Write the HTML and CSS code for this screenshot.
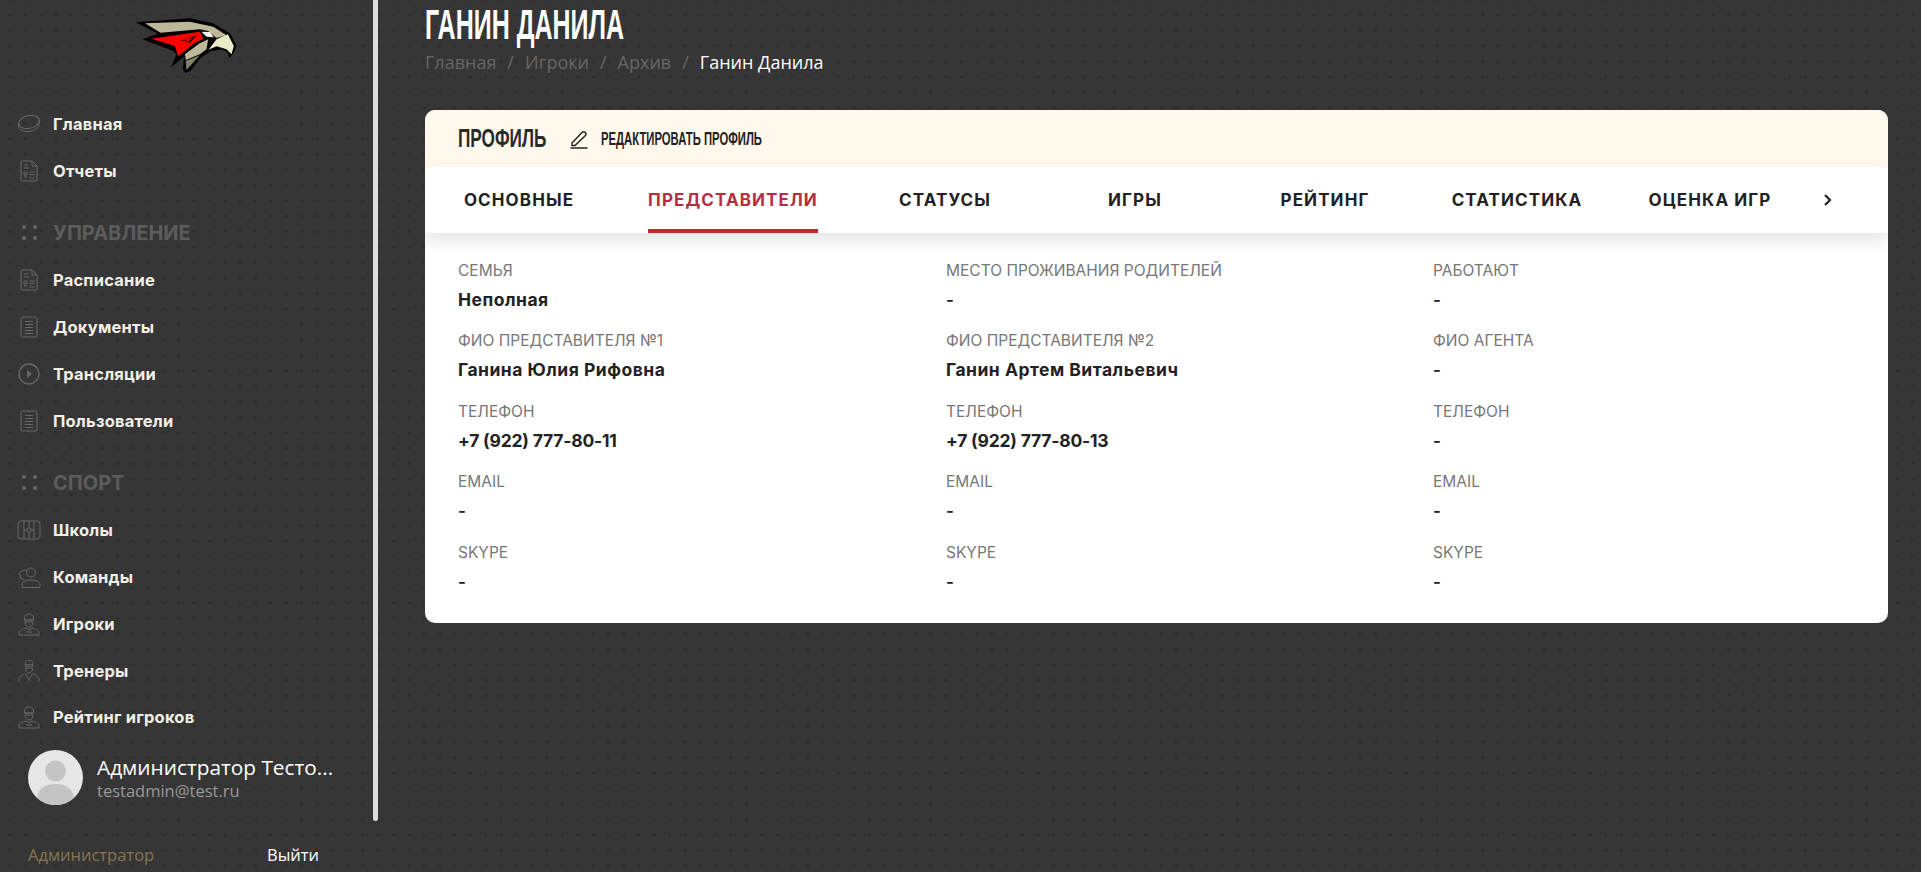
FILE: index.html
```html
<!DOCTYPE html>
<html lang="ru">
<head>
  <meta charset="UTF-8" />
  <title>Ганин Данила</title>
  <link rel="stylesheet" href="styles.css">
</head>
<body>
<svg width="0" height="0" class="defs">
  <defs>
    <symbol id="i-puck" viewBox="0 0 24 20">
      <ellipse cx="12" cy="8" rx="10.5" ry="6.5" transform="rotate(-12 12 8)" fill="none" stroke="currentColor"/>
      <path d="M1.5 9v3.5c.5 3 4 5 8.5 5 5 0 10-2 12-6.5V6.500" fill="none" stroke="currentColor"/>
    </symbol>
    <symbol id="i-report" viewBox="0 0 24 24">
      <path d="M5 2h10l5 5v14a1 1 0 0 1-1 1H5a1 1 0 0 1-1-1V3a1 1 0 0 1 1-1zM15 2v5h5M7 6h4M7 9h5M7 13h3v3H7zM7 18h3M12.500 13h5M12.500 15.500h5M12.500 19h5" fill="none" stroke="currentColor"/>
    </symbol>
    <symbol id="i-doc" viewBox="0 0 24 24">
      <rect x="4" y="2" width="16" height="20" rx="2" fill="none" stroke="currentColor"/>
      <path d="M8 6.500h8M8 9.500h8M8 12.500h8M8 15.500h8M8 18.500h8" stroke="currentColor"/>
    </symbol>
    <symbol id="i-play" viewBox="0 0 24 24">
      <circle cx="12" cy="12" r="10" fill="none" stroke="currentColor" stroke-width="1.300"/>
      <path d="M10 8l5 4-5 4z" fill="currentColor"/>
    </symbol>
    <symbol id="i-dots" viewBox="0 0 24 24">
      <circle cx="7" cy="6" r="2" fill="currentColor"/><circle cx="18" cy="6" r="2" fill="currentColor"/>
      <circle cx="7" cy="17" r="2" fill="currentColor"/><circle cx="18" cy="17" r="2" fill="currentColor"/>
    </symbol>
    <symbol id="i-field" viewBox="0 0 24 20">
      <rect x="1" y="1" width="22" height="18" rx="3" fill="none" stroke="currentColor"/>
      <path d="M7 1v18M17 1v18M12 1v6.500M12 12.500V19M7 10h2.800M14.200 10H17" fill="none" stroke="currentColor"/>
      <circle cx="12" cy="10" r="2.200" fill="none" stroke="currentColor"/>
    </symbol>
    <symbol id="i-team" viewBox="0 0 24 22">
      <circle cx="14" cy="6.500" r="4.500" fill="none" stroke="currentColor"/>
      <path d="M5 21.500v-3c0-3 4-4.500 9-4.500s9 1.500 9 4.500v3zM10 4C6 4 2.500 6 1.500 8l2.500 2-1 2 4 1.500" fill="none" stroke="currentColor"/>
    </symbol>
    <symbol id="i-player" viewBox="0 0 24 24">
      <path d="M7.500 8V6c0-2.500 2-4 4.500-4s4.500 1.500 4.500 4v2zM7 8h10M8 10c0 3 1.500 5 4 5s4-2 4-5M8 10h8M2 23v-2c0-3 4-4 7-5l3 2 3-2c3 1 7 2 7 5v2zM9 20h6" fill="none" stroke="currentColor"/>
    </symbol>
    <symbol id="i-coach" viewBox="0 0 24 26">
      <path d="M8 8V4c0-1.500 1.500-2.500 4-2.500s4 1 4 2.500v4zM8 6h8M8 10c0 3 1.500 5 4 5s4-2 4-5zM1 25v-3c0-3 4-5 7-6l4 6 4-6c3 1 7 3 7 6v3M12 22v3" fill="none" stroke="currentColor"/>
    </symbol>
  </defs>
</svg>

<div class="layout">
  <aside class="sidebar">
    <div class="side-scroll">
      <div class="logo">
        <svg width="107" height="60" viewBox="400 50 320 180">
          <path d="M408 69 L570 57 L640 72 L692 103 L710 140 L702 160 L688 177 L684 160 L665 150 L632 156 L602 176 L572 215 L556 221 L549 208 L552 172 L514 204 L530 165 L520 155 L428 120 L474 103 Z" fill="#000"/>
          <path d="M436 72 L570 67 L640 82 L680 108 L650 116 L625 95 L600 90 L482 100 Z" fill="#bdb89a"/>
          <path d="M455 118 L600 97 L610 118 L585 130 L535 171 L525 140 Z" fill="#f00"/>
          <path d="M540 125 L590 108 L570 132 L555 124 Z" fill="#2a0a0a"/>
          <path d="M552 121 L578 114 L566 126 Z" fill="#f00"/>
          <path d="M605 97 L630 98 L642 114 L620 112 Z" fill="#f4f4f0"/>
          <path d="M626 151 L650 120 L684 105 L702 140 L695 165 L680 150 L650 141 Z" fill="#ecebc8"/>
          <path d="M555 165 L600 132 L625 120 L620 150 L600 165 L558 182 Z" fill="#bdb89a"/>
          <path d="M558 185 L600 168 L560 212 Z" fill="#7f8468"/>
        </svg>
      </div>
      <nav class="menu">
        <a class="menu-item"><svg class="icon"><use href="#i-puck"/></svg>Главная</a>
        <a class="menu-item"><svg class="icon"><use href="#i-report"/></svg>Отчеты</a>
        <div class="menu-title"><svg class="icon"><use href="#i-dots"/></svg>Управление</div>
        <a class="menu-item"><svg class="icon"><use href="#i-report"/></svg>Расписание</a>
        <a class="menu-item"><svg class="icon"><use href="#i-doc"/></svg>Документы</a>
        <a class="menu-item"><svg class="icon"><use href="#i-play"/></svg>Трансляции</a>
        <a class="menu-item"><svg class="icon"><use href="#i-doc"/></svg>Пользователи</a>
        <div class="menu-title"><svg class="icon"><use href="#i-dots"/></svg>Спорт</div>
        <a class="menu-item"><svg class="icon"><use href="#i-field"/></svg>Школы</a>
        <a class="menu-item"><svg class="icon"><use href="#i-team"/></svg>Команды</a>
        <a class="menu-item"><svg class="icon"><use href="#i-player"/></svg>Игроки</a>
        <a class="menu-item"><svg class="icon"><use href="#i-coach"/></svg>Тренеры</a>
        <a class="menu-item"><svg class="icon"><use href="#i-player"/></svg>Рейтинг игроков</a>
      </nav>
      <div class="user">
        <svg class="avatar" viewBox="0 0 55 55">
          <circle cx="27.500" cy="27.500" r="27.500" fill="#e6e6e6"/>
          <circle cx="27.500" cy="21" r="10.500" fill="#c4c4c4"/>
          <path d="M9 48c1-10 9-14 18.500-14S45 38 46 48a27.500 27.500 0 0 1-37 0z" fill="#c4c4c4"/>
        </svg>
        <div class="user-text">
          <div class="user-name">Администратор Тесто...</div>
          <div class="user-mail">testadmin@test.ru</div>
        </div>
      </div>
    </div>
    <div class="side-foot">
      <span class="role">Администратор</span>
      <a class="logout">Выйти</a>
    </div>
  </aside>
  <div class="scrollbar"><div class="scrollbar-thumb"></div></div>

  <main class="content">
    <h1 class="page-title"><span>Ганин Данила</span></h1>
    <div class="crumbs">
      <span>Главная</span><i>/</i><span>Игроки</span><i>/</i><span>Архив</span><i>/</i><b>Ганин Данила</b>
    </div>

    <section class="card">
      <header class="card-head">
        <h2><span>Профиль</span></h2>
        <a class="edit">
          <svg width="20" height="20" viewBox="0 0 20 20"><path d="M3 14L13 3.500c1-1 2.200-1 3.200 0s1 2.200 0 3.200L6 16.500H3zM1.500 19h17" fill="none" stroke="#222" stroke-width="1.400"/></svg>
          <span>Редактировать профиль</span>
        </a>
      </header>
      <div class="tabs">
        <a class="tab"><span>Основные</span></a>
        <a class="tab active"><span>Представители</span></a>
        <a class="tab"><span>Статусы</span></a>
        <a class="tab"><span>Игры</span></a>
        <a class="tab"><span>Рейтинг</span></a>
        <a class="tab"><span>Статистика</span></a>
        <a class="tab"><span>Оценка игр</span></a>
        <a class="tab-next"><svg width="10" height="14" viewBox="0 0 10 14"><path d="M2 2l5 5-5 5" fill="none" stroke="#222" stroke-width="2.200"/></svg></a>
      </div>
      <div class="info">
        <div class="field"><label>Семья</label><p class="strong">Неполная</p></div>
        <div class="field"><label>Место проживания родителей</label><p>-</p></div>
        <div class="field"><label>Работают</label><p>-</p></div>

        <div class="field"><label>ФИО представителя №1</label><p class="strong">Ганина Юлия Рифовна</p></div>
        <div class="field"><label>ФИО представителя №2</label><p class="strong">Ганин Артем Витальевич</p></div>
        <div class="field"><label>ФИО агента</label><p>-</p></div>

        <div class="field"><label>Телефон</label><p class="strong phone">+7 (922) 777-80-11</p></div>
        <div class="field"><label>Телефон</label><p class="strong phone">+7 (922) 777-80-13</p></div>
        <div class="field"><label>Телефон</label><p>-</p></div>

        <div class="field"><label>Email</label><p>-</p></div>
        <div class="field"><label>Email</label><p>-</p></div>
        <div class="field"><label>Email</label><p>-</p></div>

        <div class="field"><label>Skype</label><p>-</p></div>
        <div class="field"><label>Skype</label><p>-</p></div>
        <div class="field"><label>Skype</label><p>-</p></div>
      </div>
    </section>
  </main>
</div>
</body>
</html>
```

FILE: styles.css
```css
* {
  box-sizing: border-box;
}
html,
body {
  height: 100%;
  margin: 0;
}
body {
  font-family: Inter, "Open Sans", sans-serif;
  color: #222;
  background-color: #363636;
  background-image: radial-gradient(circle, #2e2e2e 0.8px, transparent 2.4px);
  background-size: 15.35px 15.47px;
  background-position: 2.3px 7.3px;
  overflow: hidden;
}
a {
  color: inherit;
  text-decoration: none;
}
.defs {
  display: block;
  height: 0;
}
.layout {
  display: flex;
  height: 872px;
}

/* sidebar */
.sidebar {
  width: 373px;
  flex: none;
  display: flex;
  flex-direction: column;
}
.side-scroll {
  height: 820px;
}
.logo {
  display: flex;
  justify-content: center;
  padding: 16px 0 0 0;
  height: 100.500px;
}
.menu-item,
.menu-title {
  display: flex;
  align-items: center;
  height: 46.800px;
  padding-left: 17px;
  font-weight: 700;
  font-size: 16.500px;
  letter-spacing: 0.2px;
  color: #f2efe6;
}
.menu-title {
  margin-top: 16px;
  font-size: 20px;
  letter-spacing: 0;
  color: #5c5c5c;
  text-transform: uppercase;
}
.icon {
  width: 24px;
  height: 24px;
  flex: none;
  margin-right: 12px;
  color: #686868;
}
.user {
  display: flex;
  align-items: center;
  margin-top: 9px;
  padding-left: 28px;
}
.avatar {
  width: 55px;
  height: 55px;
  flex: none;
}
.user-text {
  margin-left: 14px;
  font-family: "Open Sans", sans-serif;
}
.user-name {
  font-size: 20.800px;
  line-height: 28px;
  color: #fff;
}
.user-mail {
  font-size: 16.500px;
  line-height: 20px;
  color: #999;
}
.side-foot {
  display: flex;
  padding: 24px 0 0 28px;
  font-family: "Open Sans", sans-serif;
  font-size: 16.500px;
  line-height: 22px;
}
.role {
  width: 239px;
  color: #86744f;
}
.logout {
  color: #fff;
}
.scrollbar {
  width: 5px;
  flex: none;
}
.scrollbar-thumb {
  height: 821px;
  background: #ddd;
  border-radius: 0 0 3px 3px;
}

/* main */
.content {
  flex: 1;
  padding: 0 33px 0 47px;
}
.page-title {
  margin: 0;
  font-family: "Liberation Sans", sans-serif;
  font-size: 42px;
  line-height: 49px;
  font-weight: 700;
  color: #fff;
  text-transform: uppercase;
}
/* no condensed face installed, squeeze the regular one */
.page-title span,
.card-head h2 span,
.edit span {
  display: inline-block;
  transform-origin: left center;
  white-space: nowrap;
}
.page-title span {
  transform: scaleX(0.595);
}
.crumbs {
  display: flex;
  align-items: center;
  height: 26px;
  font-family: "Open Sans", sans-serif;
  font-size: 18px;
  color: #666;
}
.crumbs i {
  font-style: normal;
  margin: 0 11px;
}
.crumbs b {
  font-weight: 400;
  color: #fff;
}
.card {
  margin-top: 35px;
  height: 513px;
  background: #fff;
  border-radius: 10px;
  overflow: hidden;
}
.card-head {
  display: flex;
  align-items: center;
  height: 57px;
  padding-left: 33px;
  background: #fff8ec;
  font-family: "Liberation Sans", sans-serif;
  text-transform: uppercase;
}
.card-head h2 {
  width: 111px;
  margin: 0;
  font-size: 26px;
  font-weight: 700;
  color: #2a2a2a;
}
.card-head h2 span {
  transform: scaleX(0.66);
}
.edit {
  display: flex;
  align-items: center;
  gap: 12px;
  font-size: 19px;
  font-weight: 700;
}
.edit span {
  transform: scaleX(0.594);
}
.tabs {
  display: grid;
  grid-template-columns: 188px 240px 184px 196px 184px 200px 186px 1fr;
  height: 66px;
  background: #fff;
  box-shadow: 0 8px 16px rgba(0, 0, 0, 0.1);
}
.tab {
  display: flex;
  justify-content: center;
  font-size: 17px;
  font-weight: 700;
  letter-spacing: 1.100px;
  text-transform: uppercase;
  color: #222;
}
.tab span {
  display: flex;
  align-items: center;
  border-bottom: 4px solid transparent;
  padding-top: 4px;
}
.tab.active {
  color: #b5303f;
}
.tab.active span {
  border-bottom-color: #c62828;
}
.tab-next {
  display: flex;
  align-items: center;
  padding-left: 20px;
}
.info {
  display: grid;
  grid-template-columns: 488px 487px 1fr;
  padding: 26px 33px 0;
}
.field {
  height: 70.400px;
}
.field label {
  display: block;
  font-size: 15.500px;
  line-height: 24px;
  color: #777;
  text-transform: uppercase;
}
.field p {
  margin: 5px 0 0;
  font-size: 17px;
  line-height: 24px;
  font-weight: 600;
}
.field p.strong {
  font-size: 17.500px;
  font-weight: 700;
  letter-spacing: 0.500px;
}
.field p.phone {
  letter-spacing: -0.200px;
}
```
